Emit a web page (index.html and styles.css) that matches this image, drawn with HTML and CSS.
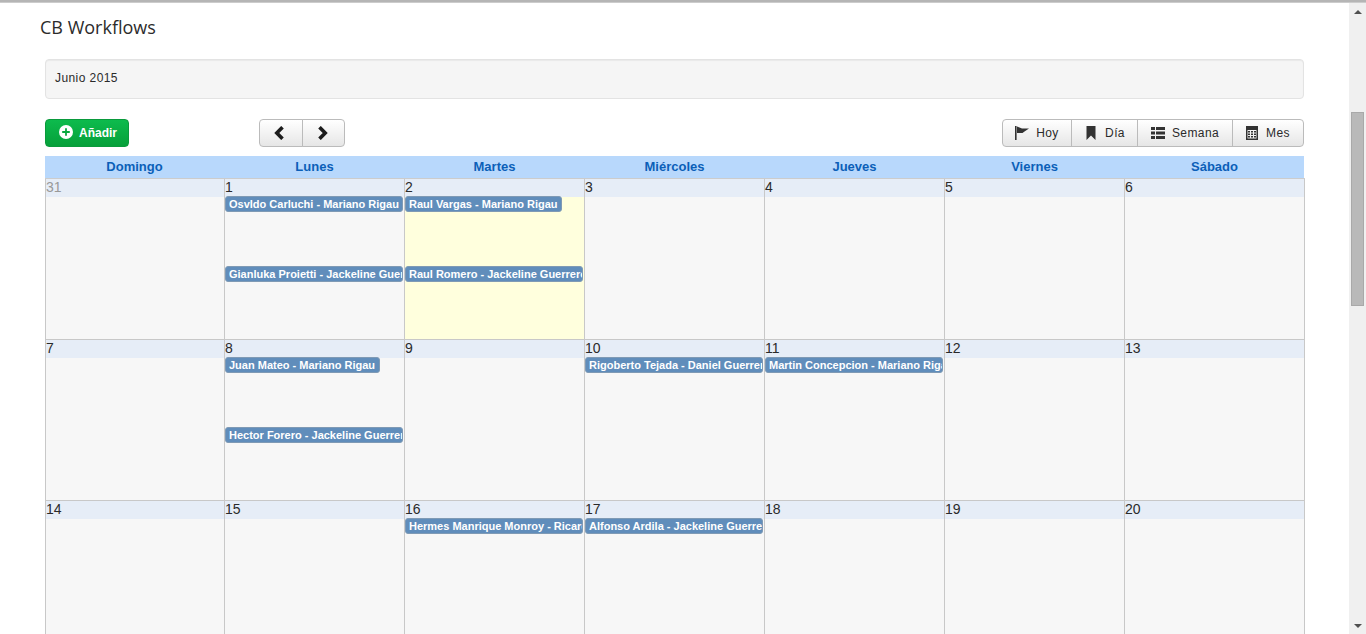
FILE: index.html
```html
<!DOCTYPE html>
<html lang="es">
<head>
<meta charset="utf-8">
<title>CB Workflows</title>
<link rel="stylesheet" href="styles.css">
</head>
<body>
<div class="topline"></div>
<div class="page">
  <main class="main">
    <h1 class="title">CB Workflows</h1>
    <div class="well">Junio 2015</div>
    <div class="toolbar">
      <div class="toolbar-left">
        <button class="btn btn-add"><svg class="ico-plus" viewBox="0 0 14 14"><circle cx="7" cy="7" r="7" fill="#fff"/><path d="M7 3.200v7.600M3.200 7h7.600" stroke="#0aa83f" stroke-width="1.800"/></svg>Añadir</button>
        <div class="group nav">
          <button class="btn"><svg class="ico" viewBox="0 0 14 14"><path d="M9.500 1.200 3.800 7l5.700 5.800" fill="none" stroke="#1c1c1c" stroke-width="3.600"/></svg></button>
          <button class="btn"><svg class="ico" viewBox="0 0 14 14"><path d="M4.500 1.200 10.200 7l-5.700 5.800" fill="none" stroke="#1c1c1c" stroke-width="3.600"/></svg></button>
        </div>
      </div>
      <div class="group views">
        <button class="btn"><svg class="ico" viewBox="0 0 14 14"><path d="M0 0h1.600v14H0zM2 .5 7 2.500h7L9.500 5.500 7.500 7H2z" fill="#333"/></svg>Hoy</button>
        <button class="btn"><svg class="ico" viewBox="0 0 14 14"><path d="M2.500 0h9v14L7 9.500 2.500 14z" fill="#333"/></svg>Día</button>
        <button class="btn"><svg class="ico" viewBox="0 0 14 14"><path d="M0 1h4v3H0zM5 1h9v3H5zM0 5.500h4v3H0zM5 5.500h9v3H5zM0 10h4v3H0zM5 10h9v3H5z" fill="#333"/></svg>Semana</button>
        <button class="btn"><svg class="ico" viewBox="0 0 14 14"><path fill-rule="evenodd" d="M1 0h12v14H1zM2.500 4v8.500h9V4zM3 5h2v1.500H3zM6 5h2v1.500H6zM9 5h2v1.500H9zM3 7.500h2V9H3zM6 7.500h2V9H6zM9 7.500h2V9H9zM3 10h2v1.500H3zM6 10h2v1.500H6zM9 10h2v1.500H9z" fill="#333"/></svg>Mes</button>
      </div>
    </div>
    <div class="cal-head">
      <div>Domingo</div><div>Lunes</div><div>Martes</div><div>Miércoles</div><div>Jueves</div><div>Viernes</div><div>Sábado</div>
    </div>
    <div class="cal-body">
      <div class="day first"><div class="num muted">31</div></div>
      <div class="day"><div class="num">1</div><div class="event">Osvldo Carluchi - Mariano Rigau</div><div class="event">Gianluka Proietti - Jackeline Guerrero</div></div>
      <div class="day today"><div class="num">2</div><div class="event">Raul Vargas - Mariano Rigau</div><div class="event">Raul Romero - Jackeline Guerrero</div></div>
      <div class="day"><div class="num">3</div></div>
      <div class="day"><div class="num">4</div></div>
      <div class="day"><div class="num">5</div></div>
      <div class="day"><div class="num">6</div></div>

      <div class="day first"><div class="num">7</div></div>
      <div class="day"><div class="num">8</div><div class="event">Juan Mateo - Mariano Rigau</div><div class="event">Hector Forero - Jackeline Guerrero</div></div>
      <div class="day"><div class="num">9</div></div>
      <div class="day"><div class="num">10</div><div class="event">Rigoberto Tejada - Daniel Guerrero</div></div>
      <div class="day"><div class="num">11</div><div class="event">Martin Concepcion - Mariano Rigau</div></div>
      <div class="day"><div class="num">12</div></div>
      <div class="day"><div class="num">13</div></div>

      <div class="day first"><div class="num">14</div></div>
      <div class="day"><div class="num">15</div></div>
      <div class="day"><div class="num">16</div><div class="event">Hermes Manrique Monroy - Ricardo</div></div>
      <div class="day"><div class="num">17</div><div class="event">Alfonso Ardila - Jackeline Guerrero</div></div>
      <div class="day"><div class="num">18</div></div>
      <div class="day"><div class="num">19</div></div>
      <div class="day"><div class="num">20</div></div>
    </div>
  </main>
  <aside class="scrollbar">
    <span class="arrow up"></span>
    <span class="thumb"></span>
    <span class="arrow down"></span>
  </aside>
</div>
</body>
</html>
```
FILE: styles.css
```css
* { box-sizing: border-box; }
html, body { margin: 0; height: 634px; overflow: hidden; background: #fff; }
body { font-family: "Liberation Sans", Arial, sans-serif; font-size: 14px; color: #333; }
.topline { height: 3px; background: #b5b5b5; border-bottom: 1px solid #ccc; }
.page { display: flex; height: 631px; }
.main { flex: 1; min-width: 0; padding-left: 45px; overflow: hidden; }
.title { margin: 13px 0 0 -5px; font: 400 18px/22px "Open Sans", sans-serif; color: #2b2b2b; }
.well { width: 1259px; height: 40px; margin-top: 21px; padding: 10px 9px; background: #f5f5f5; border: 1px solid #e3e3e3; border-radius: 4px; font-size: 12px; line-height: 16px; letter-spacing: .42px; color: #2a2a2a; box-shadow: inset 0 1px 1px rgba(0,0,0,.05); }
.toolbar { width: 1259px; height: 28px; margin-top: 20px; display: flex; justify-content: space-between; }
.toolbar-left { display: flex; gap: 130px; }
.btn { display: flex; align-items: center; justify-content: center; gap: 7px; height: 28px; padding: 0 12px; font: 12px/16px "Liberation Sans", Arial, sans-serif; letter-spacing: .4px; color: #2a2a2a; background: linear-gradient(#fff, #e6e6e6); border: 1px solid #bbb; border-radius: 4px; }
.btn-add { width: 84px; padding: 0 0 0 2px; gap: 6px; font-weight: 700; letter-spacing: 0; color: #fff; background: linear-gradient(#0dbb4d, #06a03a); border-color: #0a9a3c; }
.ico-plus { width: 14px; height: 14px; margin-top: -2px; }
.ico { width: 14px; height: 14px; margin-top: -1px; }
.group { display: flex; }
.group .btn { border-radius: 0; margin-left: -1px; }
.group .btn:first-child { border-radius: 4px 0 0 4px; margin-left: 0; }
.group .btn:last-child { border-radius: 0 4px 4px 0; }
.nav .btn { width: 44px; padding: 0 2px 0 0; }
.nav .btn:last-child { width: 43px; padding-right: 4px; }
.views .btn:nth-child(1) { width: 70px; }
.views .btn:nth-child(2) { width: 67px; }
.views .btn:nth-child(3) { width: 96px; }
.views .btn:nth-child(4) { width: 72px; padding-right: 13px; }
.cal-head { width: 1259px; height: 22px; margin-top: 9px; display: grid; grid-template-columns: repeat(7, 180px); background: #b8d8fc; font-size: 13px; font-weight: 700; line-height: 22px; text-align: center; color: #0b5fb8; overflow: hidden; }
.cal-head div { padding-right: 1px; }
.cal-body { width: 1260px; display: grid; grid-template-columns: repeat(7, 180px); grid-auto-rows: 161px; border-top: 1px solid #ccc; }
.day { background: #f7f7f7; border-right: 1px solid #c8c8c8; border-bottom: 1px solid #c8c8c8; min-width: 0; }
.day.first { border-left: 1px solid #c8c8c8; }
.day.today { background: #ffffdd; }
.num { height: 18px; background: #e6edf7; font-size: 14px; line-height: 16px; color: #2a2a2a; }
.num.muted { color: #999; }
.event { width: fit-content; max-width: 178px; height: 16px; margin-top: -1px; padding: 0 3.5px 0 3px; background: #608dbb; border: 1px solid #7f9ab5; border-radius: 3px; color: #fff; font-size: 11px; font-weight: 700; line-height: 14px; white-space: nowrap; overflow: hidden; }
.event + .event { margin-top: 54px; }
.scrollbar { width: 17px; flex: none; background: #f0f0f0; display: flex; flex-direction: column; align-items: center; justify-content: space-between; position: relative; }
.thumb { position: absolute; top: 109px; left: 2px; width: 13px; height: 194px; background: #b9b9b9; border: 1px solid #a9a9a9; }
.arrow { width: 0; height: 0; border-left: 4px solid transparent; border-right: 4px solid transparent; }
.arrow.up { margin-top: 7px; border-bottom: 4px solid #505050; }
.arrow.down { margin-bottom: 6px; border-top: 4px solid #505050; }
```
